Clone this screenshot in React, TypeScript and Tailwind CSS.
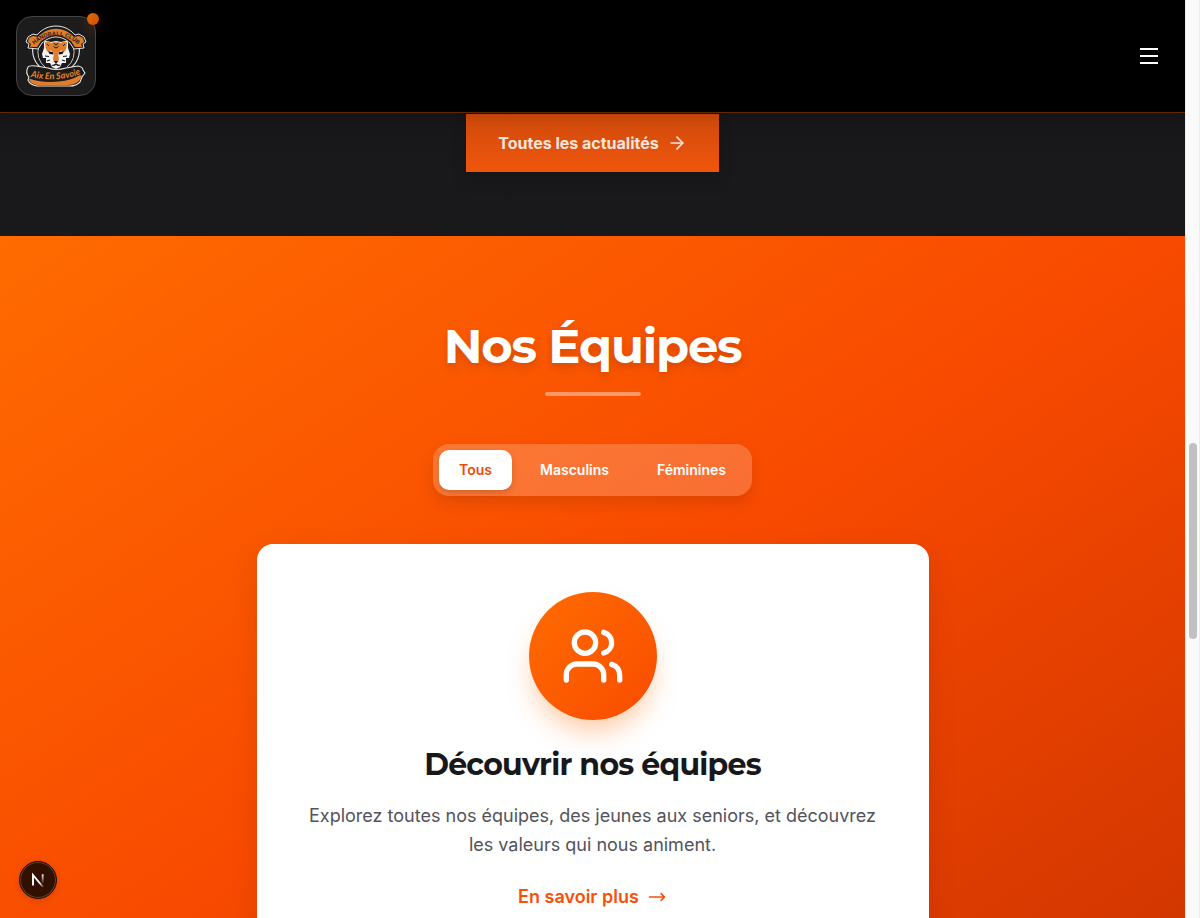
import { ArrowRight, Users } from "lucide-react";

function TigerLogo() {
  return (
    <svg viewBox="0 0 64 64" className="h-16 w-16 overflow-visible" aria-label="Handball Club Aix en Savoie">
      <defs>
        <path id="crest-arc" d="M9.5 21Q32 1.5 54.5 21" />
        <path id="name-curve" d="M2 52Q34 60 61 48.5" />
      </defs>
      <circle cx="32" cy="26" r="23.4" fill="#1b1b1b" stroke="#dedede" strokeWidth="1.2" />
      <path d="M15 22A18.5 18.5 0 0 0 21 43M49 22A18.5 18.5 0 0 1 43 43" fill="none" stroke="#c4c4c4" strokeWidth="1" />
      <path d="M4 13l5-3 4 1C23-1 41-1 51 11l4-1 5 3 2 5-3 2 1 4-10 1-4-6C37 11 27 11 18 19l-4 6-10-1 1-4-3-2z" fill="#1b1b1b" stroke="#e6e6e6" strokeWidth="1" strokeLinejoin="round" />
      <path d="M5 14l4-2 5 1C24 2 40 2 50 13l5-1 4 2 1 4-3 2 1 3-7 0-4-6C37 9 27 9 17 17l-4 6-7 0 1-3-3-2z" fill="#df7d2b" />
      <text fill="#28201a" fontFamily="Liberation Sans, sans-serif" fontWeight="700" fontSize="5.7"><textPath href="#crest-arc" startOffset="50%" textAnchor="middle">HANDBALL CLUB</textPath></text>
      <path d="M20 19q0-3 3-2l4 1 5-1 5 1 4-1q3-1 3 2l0 5 2 6-1 4-3 0 0 5-4 0-2 4-4 2-4-2-2-4-4 0 0-5-3 0-1-4 2-6z" fill="#f3f3f3" />
      <path d="M21 18.500q2-2 6 .5l5-1 5 1q4-2.500 6-.5l-.5 5-1.500 4-4-1-3 3 1 6q-1 3-3 3t-3-3l1-6-3-3-4 1-1.500-4z" fill="#df7d2b" />
      <path d="M29.500 19l2.500 2 2.500-2M29.500 22.500l2.500 1.500 2.500-1.500M23 20l2 2m16-2-2 2" fill="none" stroke="#191919" strokeWidth="1" />
      <path d="M24 27l5 1.200 .5 2.300-4-.5zM40 27l-5 1.200-.5 2.300 4-.5zM29.500 37h5L32 39.500z" fill="#141414" />
      <path d="M21 32l4 .5m18-.5-4 .5M23 37l3-1m15 1-3-1M28 41q2 1 4-1 2 2 4 1" fill="none" stroke="#191919" strokeWidth="1.100" />
      <path d="M4 43q1-2 8-1l12 2q8 3 18 0l12-2q5 1 5 4l2 3-3 4-2 5q-4 4-10 4H13q-7-1-9-6l1-3q-4-4-1-10z" fill="#1b1b1b" stroke="#e6e6e6" strokeWidth="1.1" strokeLinejoin="round" />
      <path d="M5 54.500q12 4.500 30 3 12-1 20-6 3-1 3 1-4 8.500-14 8.500H13q-7-1-8-6.500z" fill="#df7d2b" />
      <text fill="#df7d2b" stroke="#1b1b1b" strokeWidth="1" paintOrder="stroke" fontFamily="Lato, sans-serif" fontStyle="italic" fontWeight="900" fontSize="9.2" letterSpacing="-0.1">
        <textPath href="#name-curve" startOffset="50%" textAnchor="middle">Aix En Savoie</textPath>
      </text>
    </svg>
  );
}

function Header() {
  return (
    <header className="relative z-10 flex h-[113px] shrink-0 items-center justify-between border-b border-[#602800] bg-black px-4 shadow-[0_2px_12px_rgba(0,0,0,0.12)]">
      <div className="relative flex h-20 w-20 items-center justify-center rounded-2xl border border-[#444444] bg-[#1c1c1c]">
        <TigerLogo />
        <span className="absolute -top-1 -right-1 h-3 w-3 rounded-full bg-linear-to-br from-[#e06a08] to-[#cf5004] shadow-[0_4px_12px_rgba(255,90,0,0.25)]" />
      </div>
      <button aria-label="Menu" className="mr-[11px] flex flex-col gap-[5px]">
        <span className="h-0.5 w-[18px] bg-white" />
        <span className="h-0.5 w-[18px] bg-white" />
        <span className="h-0.5 w-[18px] bg-white" />
      </button>
    </header>
  );
}

export default function App() {
  return (
    <div className="flex h-[918px] w-[1200px] overflow-hidden font-['Inter',sans-serif]">
      <div className="relative flex w-[1185px] flex-col overflow-hidden">
        <Header />
        <section className="flex h-[123px] shrink-0 justify-center bg-linear-to-b from-[#161618] via-[#19191b] via-40% to-[#19191b] pt-px">
          <button className="flex h-[58px] w-[253px] items-center justify-center gap-2 bg-linear-to-b from-[#cb480b] via-[#e4510c] via-60% to-[#ef560c] font-bold text-[#f5e6de] shadow-[0_10px_15px_rgba(0,0,0,0.12)]">
            Toutes les actualités
            <ArrowRight size={20} strokeWidth={2} />
          </button>
        </section>
        <section className="flex h-[800px] shrink-0 flex-col items-center bg-[linear-gradient(to_bottom_right,#ff6b00_0%,#f84a00_50%,#cc3300_100%)] pt-20">
          <h2 className="h-[60px] whitespace-nowrap font-['Montserrat',sans-serif] text-[48px] leading-[60px] font-bold tracking-[-0.025em] text-white [text-shadow:0_4px_8px_rgba(0,0,0,0.15)]">
            Nos Équipes
          </h2>
          <div className="mt-4 h-1 w-24 rounded-full bg-white/40" />
          <div className="mt-12 flex h-[52px] w-[319px] gap-2 rounded-2xl bg-white/20 p-1.5 text-sm font-semibold text-white shadow-[0_8px_16px_rgba(0,0,0,0.1)]">
            <button className="h-10 w-[73px] rounded-[10px] bg-white text-[#f04b08] shadow-[0_3px_6px_rgba(0,0,0,0.15)]">Tous</button>
            <button className="h-10 w-[109px]">Masculins</button>
            <button className="h-10 w-[109px]">Féminines</button>
          </div>
          <div className="mt-12 flex h-[415px] w-[672px] shrink-0 flex-col items-center rounded-2xl bg-white px-12 pt-12 shadow-[0_10px_30px_rgba(0,0,0,0.1)]">
            <div className="flex h-32 w-32 shrink-0 items-center justify-center rounded-full bg-linear-to-br from-[#ff6b00] to-[#f94b00] shadow-[0_16px_28px_-6px_rgba(255,107,0,0.38)]">
              <Users size={64} strokeWidth={2} className="text-white" />
            </div>
            <h3 className="mt-[25px] h-10 whitespace-nowrap font-['Montserrat',sans-serif] text-[30px] leading-10 font-bold tracking-[-0.025em] text-[#18181b]">
              Découvrir nos équipes
            </h3>
            <p className="mt-4 w-[576px] text-center text-lg leading-[29px] text-[#52525b]">
              Explorez toutes nos équipes, des jeunes aux seniors, et découvrez les valeurs qui nous animent.
            </p>
            <a className="mt-6 flex items-center gap-2 text-lg leading-7 font-semibold text-[#f94f08]">
              En savoir plus
              <svg className="h-5 w-5" fill="none" viewBox="0 0 24 24" stroke="currentColor" strokeWidth="2" strokeLinecap="round" strokeLinejoin="round">
                <path d="M17 8l4 4m0 0l-4 4m4-4H3" />
              </svg>
            </a>
          </div>
        </section>
        <button aria-label="Next.js" className="absolute bottom-[19px] left-[19px] z-20 flex h-[38px] w-[38px] items-center justify-center rounded-full border border-[#291006] bg-[#321000] shadow-[inset_0_0_0_1px_#674332,0_2px_8px_rgba(0,0,0,0.12)]">
          <svg className="h-4 w-4" viewBox="0 0 16 16" fill="none">
            <defs>
              <linearGradient id="stem" x1="0" y1="2" x2="0" y2="12" gradientUnits="userSpaceOnUse"><stop stopColor="#fff" /><stop offset="1" stopColor="#fff" stopOpacity="0" /></linearGradient>
              <linearGradient id="diagonal" x1="3" y1="2" x2="14" y2="15" gradientUnits="userSpaceOnUse"><stop offset=".65" stopColor="#fff" /><stop offset="1" stopColor="#fff" stopOpacity="0.1" /></linearGradient>
            </defs>
            <path d="M3 13.5V3l10 12" stroke="url(#diagonal)" strokeWidth="1.9" />
            <path d="M12.7 2.3v10" stroke="url(#stem)" strokeWidth="1.8" />
          </svg>
        </button>
      </div>
      <aside className="flex w-[15px] justify-center border-x border-[#ededed] bg-[#fafafa] pt-[443px]">
        <div className="h-[196px] w-2 rounded-full bg-[#c1c1c1]" />
      </aside>
    </div>
  );
}
